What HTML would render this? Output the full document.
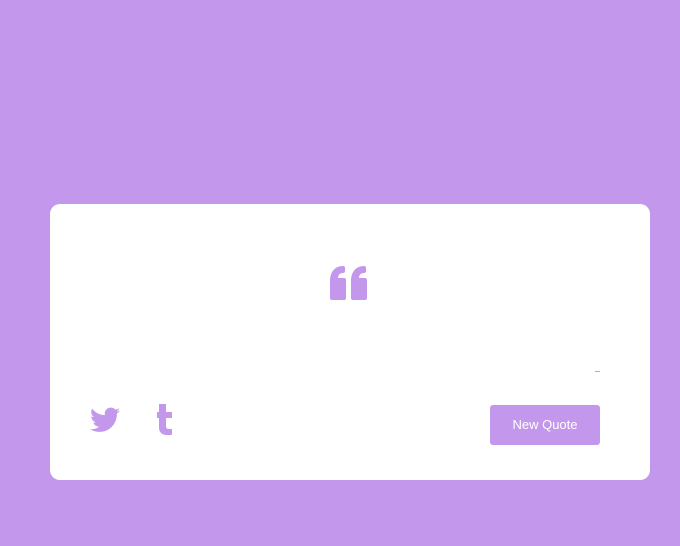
<!DOCTYPE html>
<html><head><style>
body{margin:0;width:680px;height:546px;background:#c398ec;font-family:"Liberation Sans",sans-serif;position:relative;overflow:hidden}
.card{position:absolute;left:50px;top:204px;width:600px;height:276px;background:#fff;border-radius:10px}
.btn{position:absolute;left:440px;top:201px;width:110px;height:40px;background:#c398ec;border-radius:3px;color:#fff;font-size:13px;line-height:40px;text-align:center}
.dash{position:absolute;left:545px;top:167px;width:5px;height:1px;background:#c398ec}
</style></head><body>
<div class="card">
<svg style="position:absolute;left:279px;top:61px" width="42" height="36" viewBox="0 0 42 36">
<path fill="#c398ec" d="M1 33V16C1 7 6 1 14 1Q16 1 16 3V6Q16 8 14 8C11 8 9 10 9 13H15Q17 13 17 15V33Q17 35 15 35H3Q1 35 1 33Z"/>
<path fill="#c398ec" d="M22 33V16C22 7 27 1 35 1Q37 1 37 3V6Q37 8 35 8C32 8 30 10 30 13H36Q38 13 38 15V33Q38 35 36 35H24Q22 35 22 33Z"/>
</svg>
<div class="dash"></div>
<svg style="position:absolute;left:40px;top:203px" width="30" height="26" viewBox="0 0 24 20">
<path fill="#c398ec" d="M24 2.4c-.9.4-1.8.6-2.8.8 1-.6 1.8-1.6 2.2-2.7-1 .6-2 1-3.1 1.2A4.9 4.9 0 0 0 11.9 6.2 14 14 0 0 1 1.7 1a4.9 4.9 0 0 0 1.5 6.6c-.8 0-1.6-.2-2.2-.6 0 2.4 1.7 4.4 3.9 4.8-.7.2-1.5.2-2.2.1.6 2 2.4 3.4 4.6 3.4A9.9 9.9 0 0 1 0 17.3 14 14 0 0 0 7.5 19.5c9.1 0 14-7.5 14-14v-.6c1-.7 1.8-1.6 2.5-2.5z"/>
</svg>
<svg style="position:absolute;left:106px;top:200px" width="18" height="31" viewBox="0 0 18 31">
<path fill="#c398ec" d="M3 0H10V8H16V14H10V22C10 24 11 25 13 25H16V30Q16 31 14 31H11C6 31 3 28 3 24V14H1V8H3Z"/>
</svg>
<div class="btn">New Quote</div>
</div>
</body></html>
